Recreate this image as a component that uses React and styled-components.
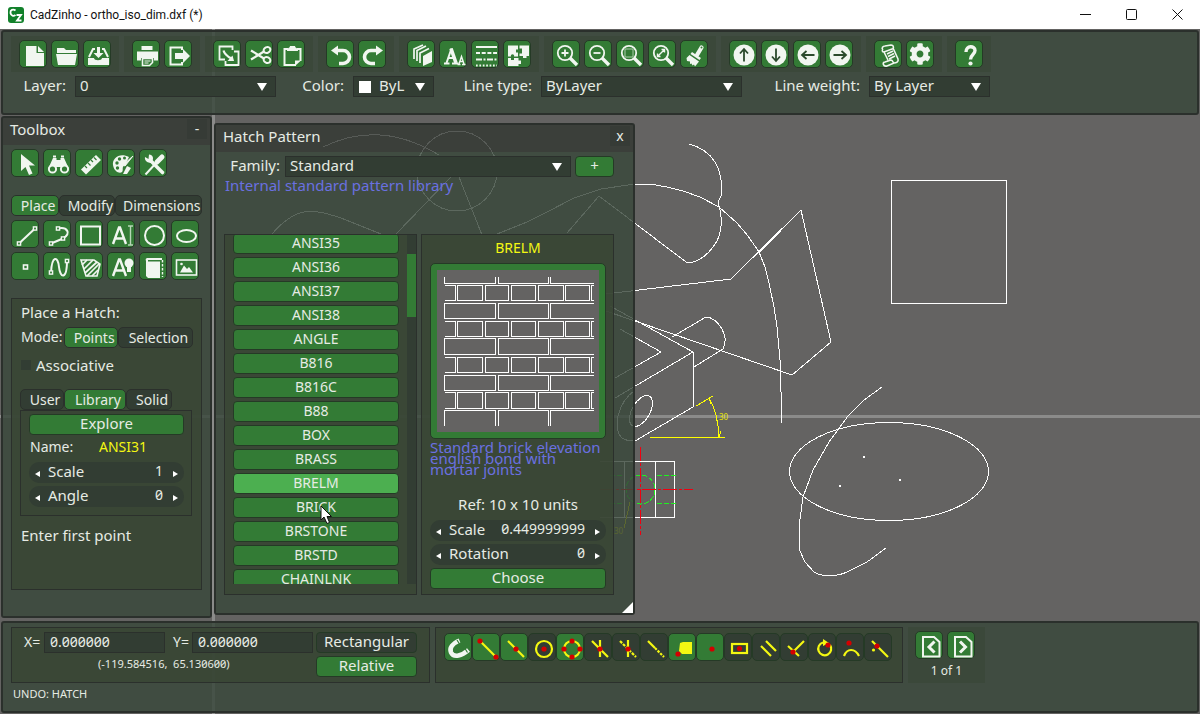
import React from "react";
import styled, { createGlobalStyle, css } from "styled-components";
import { FaCog } from "react-icons/fa";

const C = {
  canvas: "#646362",
  panel: "rgba(56, 71, 58, 0.82)",
  head: "rgba(50, 55, 50, 0.82)",
  group: "rgba(57, 70, 53, 0.85)",
  edge: "#2b302c",
  field: "#323d33",
  green: "#337b35",
  active: "#4caf50",
  text: "#e6ebe4",
  blue: "#6a70e0",
  yellow: "#f4f812",
  red: "#d40000",
};

const Global = createGlobalStyle`
  *, *::before, *::after { box-sizing: border-box; }
  body { margin: 0; background: ${C.canvas}; }
  body, button, input, select {
    font-family: "Noto Sans", "Open Sans", sans-serif;
    font-size: 15px;
    line-height: 20px;
    color: ${C.text};
  }
  button, input, select { padding: 0; margin: 0; border: 0; outline: 0; }
`;

/* ---------- shell ---------- */

const Page = styled.div`
  display: flex;
  flex-direction: column;
  min-height: 100vh;
`;

const TitleBar = styled.header`
  display: flex;
  align-items: center;
  height: 29px;
  padding-left: 8px;
  background: #fff;
  color: #111;
  svg { display: block; }
`;

const AppTitle = styled.h1`
  flex: 1;
  margin: 0 0 0 6px;
  font-family: Roboto, "Open Sans", sans-serif;
  font-size: 12px;
  font-weight: 400;
  line-height: 20px;
`;

const WinButton = styled.button`
  display: grid;
  place-items: center;
  width: 46px;
  height: 28px;
  background: none;
`;

const Workspace = styled.main`
  position: relative;
  flex: 1;
  display: flex;
  flex-direction: column;
  padding: 1px 1px 0 1px;
  overflow: hidden;
`;

const Drawing = styled.svg`
  position: absolute;
  inset: 0;
  width: 100%;
  height: 100%;
  shape-rendering: crispEdges;
`;

const Panel = styled.section`
  position: relative;
  border: 2px solid ${C.edge};
  border-radius: 3px;
`;

const TopBar = styled(Panel)`
  height: 85px;
  padding: 4px 8px;
  background: ${C.panel};
`;

const Middle = styled.div`
  flex: 1;
  display: flex;
  align-items: flex-start;
  gap: 2px;
  padding-top: 1px;
`;

const PanelHead = styled.header`
  display: flex;
  justify-content: space-between;
  align-items: center;
  height: 27px;
  padding: 0 3px 5px 7px;
  background: ${C.head};
`;

const PanelTitle = styled.h2`
  margin: 0;
  font-size: 15px;
  font-weight: 400;
`;

const HeadButton = styled.button`
  width: 20px;
  height: 20px;
  background: rgba(50, 55, 50, 0.5);
  font-size: 14px;
`;

/* ---------- shared controls ---------- */

const ToolRow = styled.div`
  display: flex;
  gap: ${(p) => p.$gap || 0}px;
`;

const ToolGroup = styled.div`
  display: flex;
  gap: 4px;
  padding: 4px 8px;
  background: rgba(57, 70, 53, 0.6);
`;

const IconButton = styled.button`
  display: grid;
  place-items: center;
  flex: none;
  width: 28px;
  height: 28px;
  border: 1px solid #253a26;
  border-radius: 5px;
  background: ${(p) => (p.$off ? C.field : C.green)};
  svg { display: block; }
`;

const Group = styled.div`
  border: 1px solid ${C.edge};
  background: ${C.group};
`;

const Button = styled.button`
  display: block;
  flex: none;
  width: ${(p) => p.$w || "100%"};
  height: 21px;
  padding-bottom: 2px;
  line-height: 17px;
  border: 1px solid #253a26;
  border-radius: 4px;
  background: ${(p) => (p.$off ? C.field : p.$active ? C.active : C.green)};
  font-size: ${(p) => (p.$caps ? 14 : 15)}px;
`;

const Tabs = styled.div`
  display: flex;
`;

const Tab = styled.button`
  height: 21px;
  width: ${(p) => p.$w}px;
  padding-left: 6px;
  line-height: 19px;
  border: 1px solid ${C.edge};
  border-radius: 5px;
  background: ${(p) => (p.$on ? C.green : C.field)};
  font-size: 14px;
  white-space: nowrap;
`;

const Combo = styled.div`
  display: flex;
  align-items: center;
  flex: ${(p) => (p.$w ? "none" : "1")};
  width: ${(p) => (p.$w ? `${p.$w}px` : "auto")};
  height: 21px;
  padding: 0 8px 0 4px;
  border: 1px solid ${C.edge};
  background: ${C.field};
  select {
    appearance: none;
    flex: 1;
    min-width: 0;
    height: 20px;
    margin-bottom: 3px;
    background: transparent;
  }
`;

const Swatch = styled.span`
  width: 12px;
  height: 12px;
  margin: 0 8px 0 1px;
  background: #fff;
`;

const FieldLabel = styled.label`
  flex: none;
  width: ${(p) => p.$w}px;
  padding: 0 ${(p) => p.$pad || 9}px 3px 0;
  text-align: right;
  white-space: nowrap;
`;

const FieldRow = styled.div`
  display: flex;
  align-items: center;
  margin-top: 3px;
`;

const Pill = styled.div`
  display: flex;
  align-items: center;
  height: 21px;
  padding: 0 5px 0 6px;
  border-radius: 10px;
  background: ${C.field};
  label { padding: 0 0 4px 7px; }
  input {
    flex: 1;
    min-width: 0;
    height: 20px;
    margin-right: 10px;
    padding-bottom: 3px;
    background: transparent;
    text-align: right;
    font-size: 14px;
    font-variant-numeric: slashed-zero;
  }
`;

const Step = styled.button`
  width: 6px;
  height: 20px;
  background: none;
  svg { display: block; margin-top: 2px; }
`;

const Arrow = () => (
  <svg width="10" height="8" viewBox="0 0 10 8" aria-hidden="true">
    <path d="M0 0h10L5 8z" fill="#fff" />
  </svg>
);

function Select({ id, value, w, swatch }) {
  return (
    <Combo $w={w}>
      {swatch && <Swatch />}
      <select id={id} defaultValue={value}>
        <option>{value}</option>
      </select>
      <Arrow />
    </Combo>
  );
}

function Property({ id, label, value }) {
  return (
    <Pill>
      <Step aria-label={`Decrease ${label}`}>
        <svg width="5" height="6" viewBox="0 0 5 6"><path d="M5 0v6L0 3z" fill="#fff" /></svg>
      </Step>
      <label htmlFor={id}>{label}</label>
      <input id={id} defaultValue={value} />
      <Step aria-label={`Increase ${label}`}>
        <svg width="5" height="6" viewBox="0 0 5 6"><path d="M0 0v6l5-3z" fill="#fff" /></svg>
      </Step>
    </Pill>
  );
}

/* ---------- icons, on a 28 unit grid ---------- */

const W = "#f1f6f0";
const G = C.green;
const line = { fill: "none", stroke: W, strokeWidth: 2 };
const thin = { fill: "none", stroke: W, strokeWidth: 1.4 };
const node = (x, y) => <rect x={x - 1.6} y={y - 1.6} width="3.2" height="3.2" fill={G} stroke={W} strokeWidth="1.4" />;
const lens = (
  <>
    <circle cx="12" cy="12" r="7.2" {...line} strokeWidth="1.8" />
    <path d="M17 17l7 7" {...line} strokeWidth="3.4" />
  </>
);
const disc = (angle) => (
  <g transform={`rotate(${angle} 14 14)`}>
    <circle cx="14" cy="14" r="10.5" fill={W} />
    <path d="M14 20.500V9M10 12.500l4-4.500 4 4.500" fill="none" stroke="#2b4a2c" strokeWidth="1.8" />
  </g>
);

const icons = {
  new: <><path d="M6 5h10.500v7H24v13H6z" fill={W} /><path d="M18 5l6 6h-6z" fill={W} /></>,
  open: <><path d="M5 7h7l2 2h10v3H5z" fill={W} /><path d="M4 13h21l-2 11H6z" fill={W} /></>,
  save: <><path d="M4 17h6c0 3 8 3 8 0h7v7H4z" fill={W} /><path d="M5 16L9 8h2M24 16l-4-8h-2" {...line} /><path d="M13 6h3v6h3.500l-5 5-5-5H13z" fill={W} /></>,
  print: <><path d="M8.500 5h11v4h-11z" fill={W} /><path d="M4 10.500h21v9h-4V17H8v2.500H4z" fill={W} /><path d="M9.500 17.500h10v4l-3 3h-7z" {...line} strokeWidth="1.600" /><path d="M11.500 20h6M11.500 22h4" {...thin} strokeWidth="1" /></>,
  exit: <><path d="M17 9V6.500H5.500v17H17V21" {...line} /><path d="M10 12h8V8l7 7-7 7v-4h-8z" fill={W} /></>,
  copy: <><path d="M11 18.500H5.500v-13h13V9" {...line} strokeWidth="1.800" /><path d="M11.500 20v4h13V10.500H20" {...line} strokeWidth="1.800" /><path d="M9.500 9.500c1 4 4 6 8 8" {...line} strokeWidth="2.200" /><path d="M20 20h-6.500l5-5.500z" fill={W} /></>,
  cut: <><path d="M5 9.500l13 8M5 18.500l13-8" {...line} strokeWidth="2.200" /><ellipse cx="21" cy="9" rx="3.500" ry="2.800" {...line} transform="rotate(-25 21 9)" /><ellipse cx="21" cy="19" rx="3.500" ry="2.800" {...line} transform="rotate(25 21 19)" /></>,
  paste: <><path d="M10 8H6.500v16H18M19 8h3.500v12" {...line} /><path d="M9 10c0-4 2.500-2 3-5h5c.5 3 3 1 3 5z" fill={W} /><path d="M17 25v-5.500h6z" fill={W} /></>,
  undo: <><path d="M9 9.500h7a6.500 6.500 0 010 13h-4" {...line} strokeWidth="3.600" /><path d="M4 9.500l7-5v10z" fill={W} /></>,
  redo: <><path d="M19 9.500h-7a6.500 6.500 0 000 13h4" {...line} strokeWidth="3.600" /><path d="M24 9.500l-7-5v10z" fill={W} /></>,
  layers: <><path d="M15 15l9-5v11l-9 4z" fill={W} /><path d="M12 22V12l9-4.500M9 20V9.500L18 5M6 18V8l9-4" {...line} strokeWidth="1.700" /></>,
  fonts: <><path d="M4 22.500h5.500M12 22.500h6.500" {...line} /><path d="M6.500 22L11.500 7.500" {...line} strokeWidth="2" /><path d="M11 7.500L16 22" {...line} strokeWidth="3.600" /><path d="M8.500 17h6" {...line} /><path d="M17.500 23.500h3M22 23.500h3.500M19 23l2.500-7.500 2.500 7.500M20 20.500h3.500" {...thin} /></>,
  ltype: <g {...line}><path d="M4 6h21" /><path d="M4 12h21" strokeDasharray="4 1.700" /><path d="M4 18.500h21" strokeDasharray="6 1.500 2 1.500" /><path d="M4 24.500h21" strokeDasharray="1.700 1.700" /></g>,
  block: <><path d="M4 4.500h10v4h-2v3h2v4H4z" fill={W} /><path d="M15.500 4.500H25V15h-2.500v2H19v-2h-3.500v-2.500h2.500v-5h-2.500z" fill={W} /><path d="M4 17h3v2h3v-2h4.500v2.500H17V23h-2.500v2H4z" fill={W} /><circle cx="8.500" cy="15" r="1.700" fill={G} /></>,
  zoomIn: <>{lens}<path d="M8.500 12h7M12 8.500v7" {...line} strokeWidth="1.800" /></>,
  zoomOut: <>{lens}<path d="M8.500 12h7" {...line} strokeWidth="1.800" /></>,
  zoomWin: <>{lens}<rect x="8" y="8" width="8" height="8" fill="none" stroke="#a9cda9" /></>,
  zoomAll: <>{lens}<path d="M9 15l6-6M12.500 8.500h3v3M8.500 12.500v3h3" {...thin} /></>,
  brush: <><path d="M20.500 6.500L16 14" {...line} strokeWidth="4.200" strokeLinecap="round" /><path d="M11 11l9 6-1.500 2-9-6z" fill={W} /><path d="M8.500 14l9.500 6.500-4 5-1-2-1.500 1-1-2-1.500.5v-2.500L6 20l-.5-3z" fill={W} /><circle cx="20.500" cy="6.500" r="1" fill={G} /></>,
  up: disc(0), down: disc(180), left: disc(-90), right: disc(90),
  script: <g {...line} strokeWidth="1.600"><path d="M8 9c-2-2 0-4 2-4l6-1c3 0 3 4 1 4l-8 3c-2 0-2-2-1-2M9 11l4 8M18 7l5 11c1 3-2 4-4 4l-7 3c-4 1-5-4-2-4l3-1M12 13l6-3M13 15.500l6-3M14 18l6-3M19 22c-2-1-1-3-3-3l-6 2" /></g>,
  help: <><path d="M10 11c0-7 9-6.500 9-1.500 0 4-4.500 4-4.500 9" {...line} strokeWidth="3.400" /><circle cx="14.500" cy="22.500" r="2.100" fill={W} /></>,
  pointer: <path d="M9 4v17l4.500-4 3.500 8 3.500-1.500-3.500-8h6z" fill={W} />,
  find: <><path d="M4 19L9 8h3.500v2h4V8H20l5 11-5-3-3 1h-5l-3-1z" fill={W} /><path d="M9 6.500h3M17 6.500h3" {...line} /><circle cx="8.500" cy="19" r="3.600" fill={G} stroke={W} strokeWidth="2" /><circle cx="20.500" cy="19" r="3.600" fill={G} stroke={W} strokeWidth="2" /></>,
  ruler: <><path d="M5 19.500L20 5l5 5-15 14.500z" fill={W} /><path d="M9 16l2 2M12 13l2.500 2.500M15 10l2 2M18 7.500l2.500 2.500" stroke={G} strokeWidth="1.200" /></>,
  palette: <><path d="M21 7C12 2 4 8 5 15s7 9 9 7-1-5 3-7z" fill={W} /><g fill={G}><circle cx="9" cy="13" r="1.700" /><circle cx="11.500" cy="9" r="1.700" /><circle cx="16.500" cy="8" r="1.500" /><circle cx="9.500" cy="18" r="1.700" /></g><path d="M25 6l-8 10-2-1z" fill={W} stroke={W} /><path d="M19 16l4 2-4 6-4 0z" fill={W} /></>,
  tools: <><path d="M5.500 24.500L17 12" {...line} strokeWidth="2" /><path d="M17 12l5-5" {...line} strokeWidth="5" strokeLinecap="round" /><path d="M11 11l11.500 11.500" {...line} strokeWidth="3.600" strokeLinecap="round" /><path d="M5 7l3.500 2 .5-4.500c4 0 5 4 3 7s-8 0-7-4.500z" fill={W} /></>,
  line: <><path d="M7 22.500L23 7.500" {...line} />{node(7, 22.500)}{node(23, 7.500)}</>,
  poly: <><path d="M7 22.500l12-5c9-5 4-12-5-10" {...line} />{node(7, 22.500)}{node(19, 17.500)}{node(14, 7.500)}</>,
  rect: <rect x="5" y="5.500" width="19" height="18" {...line} />,
  text: <><path d="M5 23L11 6.500h1L18 23M7.500 17.500h8" {...line} strokeWidth="2.400" /><path d="M20 5h5M22.500 5v19M20 24h5" fill="none" stroke="#b7d6b7" strokeWidth="1.400" /></>,
  circle: <circle cx="14.500" cy="14.500" r="9.500" {...line} />,
  ellipse: <ellipse cx="14.500" cy="15" rx="9.500" ry="6" {...line} />,
  point: <rect x="11.500" y="12" width="4" height="4" {...thin} strokeWidth="1.600" />,
  spline: <><path d="M7 19.500C8 2 14 3 15 14s8 14 8-7" {...line} />{node(7, 19.500)}{node(23, 8)}</>,
  hatch: <><path d="M5 7h13l6 4-3 12H10z" {...line} strokeWidth="1.600" /><path d="M6 12l5-5M8 16l9-9M9 20l12-11M11 23l12-12M16 23l6-6" {...line} strokeWidth="1.700" /></>,
  note: <><path d="M5 23L11 6.500h1L18 23M7.500 17.500h8" {...line} strokeWidth="2.400" /><circle cx="21" cy="10" r="4.500" fill={W} /><path d="M19 13h4v6h-4z" fill={W} /></>,
  book: <><path d="M6 8c-1-3 1-3 2-3h14v2H8v1.500h12V25H8l-2-2z" fill={W} /><path d="M22.500 7v17" {...thin} strokeDasharray="2.500 1.500" /></>,
  image: <><rect x="4.500" y="7" width="20" height="15" {...line} strokeWidth="1.600" /><path d="M8 19.500l4-7 3 3.500 2-2 4 5.500z" fill={W} /><circle cx="9.500" cy="11" r="1.300" fill={W} /></>,
  prev: <><path d="M7 5h11l5.500 5v14.500H7z" {...line} /><path d="M18.500 9.500L13 15l5.500 5.500" {...line} strokeWidth="3" /></>,
  next: <><path d="M7 5h11l5.500 5v14.500H7z" {...line} /><path d="M12 9.500l5.500 5.500-5.500 5.500" {...line} strokeWidth="3" /></>,
};

const yl = { fill: "none", stroke: C.yellow, strokeWidth: 2.2 };
const dot = (x, y) => <circle cx={x} cy={y} r="2.600" fill={C.red} />;
const snaps = [
  ["Snap", true, <><path d="M14.500 6.500c-7 3-10.500 7.500-8.500 12 3 6 11 3 17.500-2.500" fill="none" stroke={W} strokeWidth="4.500" /><path d="M12 6l2.500 4M20 14.500l2.500 4" stroke={G} strokeWidth="1.200" /></>],
  ["End point", true, <><path d="M7 7l16 16" {...yl} />{dot(7, 7)}{dot(23, 23)}</>],
  ["Middle", true, <><path d="M7 7l16 16" {...yl} />{dot(15, 15)}</>],
  ["Center", false, <><circle cx="15" cy="15" r="8" {...yl} />{dot(15, 15)}</>],
  ["Quadrant", true, <><circle cx="15" cy="15" r="8" {...yl} />{dot(15, 7)}{dot(15, 23)}{dot(7, 15)}{dot(23, 15)}</>],
  ["Intersection", false, <><path d="M7 7l16 16M15 6v17" {...yl} />{dot(15, 15)}</>],
  ["Apparent intersection", false, <><path d="M7 7l16 16" {...yl} strokeDasharray="3 1.200" /><path d="M15 6v17" {...yl} />{dot(15, 15)}</>],
  ["Extension", false, <><path d="M7 7l7 7" {...yl} /><path d="M14 14l9 9" {...yl} strokeDasharray="2.500 1.200" /></>],
  ["Insertion", true, <><path d="M11 9l3-1h9v12H13l-3-3z" fill={C.yellow} />{dot(9, 20)}</>],
  ["Node", true, dot(15, 15)],
  ["Bounding", false, <><rect x="7" y="10" width="15" height="9" {...yl} />{dot(14.500, 14.500)}</>],
  ["Parallel", false, <><path d="M8 12l10 10M13 7l10 10" {...yl} /></>],
  ["Perpendicular", false, <><path d="M23 7L12 18M7 12l11 10" {...yl} />{dot(12, 18)}</>],
  ["Tangent", false, <><path d="M21 11a6.500 6.500 0 11-7-2.500" {...yl} /><path d="M14 5l6 4-6 3z" fill={C.yellow} />{dot(19, 11)}</>],
  ["Nearest arc", false, <><path d="M7 22c3-8 11-8 15 0" {...yl} />{dot(12, 9)}</>],
  ["Nearest", false, <><path d="M7 7l16 16" {...yl} />{dot(12, 12)}<circle cx="8.500" cy="16" r="1.600" fill={C.yellow} /></>],
];

const Glyph = ({ children }) => (
  <svg width="28" height="28" viewBox="0 0 28 28" aria-hidden="true">{children}</svg>
);

function Tool({ name }) {
  return (
    <IconButton aria-label={name}>
      {name === "settings" ? <FaCog size={22} color={W} /> : <Glyph>{icons[name]}</Glyph>}
    </IconButton>
  );
}

/* ---------- drawing area ---------- */

function Canvas() {
  return (
    <Drawing aria-label="Drawing">
      <g transform="translate(0 -29)" fill="none" stroke="#fff" strokeWidth="1">
        <path d="M0 416.500H4000M213.500 0V4000" stroke="#8b8b8a" strokeWidth="3" />
        <path d="M689 144C712 150 724 168 721 196L718 202C724 222 722 236 713 247 706 257 696 262 690 263L686 262 599 196 567 233" />
        <path d="M497 234L527 222 547 212 574 198 601 189 635 184 650 184 667 187 683 191 700 197 719 207 737 223 748 236 759 252 765 267 769 283 774 307 777 327 780 360 782 423" />
        <path d="M480 303L614 293 731 279 801 210 831 342 792 375 635 321 600 309" />
        <path d="M759 252L780 231" strokeWidth="2" />
        <path d="M610 306L693 352V407L635 441M672 337L706 317C718 318 730 336 723 349L694 367M693 352L615 398M620 329L661 352 615 378" />
        <ellipse cx="641" cy="411" rx="17" ry="9" transform="rotate(-60 641 411)" />
        <path d="M635 390C616 404 613 430 622 438 626 441 631 441 635 441" />
        <rect x="891.500" y="180.500" width="115" height="123" />
        <ellipse cx="889" cy="471.500" rx="99.500" ry="49" />
        <path d="M882 387L864 400 848 416 829 442 813 470 803 497 799 527 800 551 805 562 814 572C822 577 836 577 847 572L867 562 886 548" />
        <circle cx="457" cy="171" r="40" />
        <path d="M323 147Q380 119 439 155M272 234C297 205 313 209 341 218L381 234M396 234L451 177M459 177L482 235" />
        <path d="M600 461.500H674.500V517.500H600M655.500 461V517M624.500 461V517" />
        <g fill="#fff" stroke="none">
          <rect x="863" y="456" width="2" height="2" />
          <rect x="899" y="479" width="2" height="2" />
          <rect x="839" y="485" width="2" height="2" />
        </g>
        <g stroke="#20f020" strokeDasharray="5 2">
          <path d="M657 475.500H676M657 503.500H676M610 475.500H624M610 503.500H624" />
          <circle cx="640.500" cy="489.500" r="14.500" />
        </g>
        <g stroke="#f00010" strokeDasharray="14 2 3 2">
          <path d="M640.500 447V535M600 489.500H693" />
        </g>
        <g stroke="#ffff00">
          <path d="M650 437.500H725M696 406L713 396M709 398Q718 413 719 437M709 398L711 404M719 437L721 431M624 528L630 502" />
        </g>
        <g fill="#e6e600" stroke="none" fontSize="8" fontFamily="Noto Sans, sans-serif">
          <text x="719" y="420">30</text>
          <text x="614" y="534">30</text>
        </g>
      </g>
    </Drawing>
  );
}

/* ---------- top bar ---------- */

const toolGroups = [
  ["new", "open", "save"],
  ["print", "exit"],
  ["copy", "cut", "paste"],
  ["undo", "redo"],
  ["layers", "fonts", "ltype", "block"],
  ["zoomIn", "zoomOut", "zoomWin", "zoomAll", "brush"],
  ["up", "down", "left", "right"],
  ["script", "settings"],
  ["help"],
];

function MainBar() {
  return (
    <TopBar>
      <ToolRow $gap={5}>
        {toolGroups.map((g) => (
          <ToolGroup key={g[0]}>{g.map((n) => <Tool key={n} name={n} />)}</ToolGroup>
        ))}
      </ToolRow>
      <FieldRow>
        <FieldLabel $w={64} htmlFor="layer">Layer:</FieldLabel>
        <Select id="layer" value="0" w={201} />
        <FieldLabel $w={77} htmlFor="color">Color:</FieldLabel>
        <Select id="color" value="ByL" w={81} swatch />
        <FieldLabel $w={107} htmlFor="ltype">Line type:</FieldLabel>
        <Select id="ltype" value="ByLayer" w={201} />
        <FieldLabel $w={127} htmlFor="lweight">Line weight:</FieldLabel>
        <Select id="lweight" value="By Layer" w={121} />
      </FieldRow>
    </TopBar>
  );
}

/* ---------- toolbox ---------- */

const ToolboxPanel = styled(Panel)`
  flex: none;
  width: 211px;
`;

const ToolboxBody = styled.div`
  display: flex;
  flex-direction: column;
  padding: 4px 8px 26px;
  background: ${C.panel};
`;

const ToolGrid = styled.div`
  display: grid;
  grid-template-columns: repeat(6, 28px);
  gap: 4px;
  margin-top: 4px;
`;

const TabStrip = styled(Tabs)`
  margin-top: 18px;
`;

const HatchForm = styled(Group)`
  min-height: 292px;
  margin-top: 18px;
  padding: 3px 8px;
`;

const Line = styled.p`
  margin: 0;
  padding-left: 1px;
`;

const ModeRow = styled.div`
  display: flex;
  margin: 5px 0 7px 1px;
  > span { width: 44px; font-size: 14px; }
`;

const Check = styled.label`
  display: flex;
  align-items: center;
  gap: 5px;
  margin-bottom: 14px;
  padding-left: 1px;
  input {
    appearance: none;
    width: 10px;
    height: 10px;
    background: ${C.field};
  }
`;

const LibraryBox = styled(Group)`
  display: flex;
  flex-direction: column;
  gap: 3px;
  width: 172px;
  padding: 3px 7px 8px 8px;
`;

const NameRow = styled.div`
  display: flex;
  height: 21px;
  line-height: 17px;
  padding-left: 1px;
  font-size: 14px;
  span { width: 69px; }
  output { color: ${C.yellow}; }
`;

const Prompt = styled(Line)`
  margin-top: 9px;
`;

function Toolbox() {
  return (
    <ToolboxPanel>
      <PanelHead>
        <PanelTitle>Toolbox</PanelTitle>
        <HeadButton aria-label="Minimize">-</HeadButton>
      </PanelHead>
      <ToolboxBody>
        <ToolRow $gap={4}>
          {["pointer", "find", "ruler", "palette", "tools"].map((n) => <Tool key={n} name={n} />)}
        </ToolRow>
        <TabStrip>
          <Tab $on $w={49}>Place</Tab>
          <Tab $w={57}>Modify</Tab>
          <Tab $w={88}>Dimensions</Tab>
        </TabStrip>
        <ToolGrid>
          {["line", "poly", "rect", "text", "circle", "ellipse", "point", "spline", "hatch", "note", "book", "image"].map((n) => (
            <Tool key={n} name={n} />
          ))}
        </ToolGrid>
        <HatchForm>
          <Line>Place a Hatch:</Line>
          <ModeRow>
            <span>Mode:</span>
            <Tab $on $w={54}>Points</Tab>
            <Tab $w={76}>Selection</Tab>
          </ModeRow>
          <Check><input type="checkbox" />Associative</Check>
          <Tabs>
            <Tab $w={44}>User</Tab>
            <Tab $on $w={62}>Library</Tab>
            <Tab $w={46}>Solid</Tab>
          </Tabs>
          <LibraryBox>
            <Button>Explore</Button>
            <NameRow><span>Name:</span><output>ANSI31</output></NameRow>
            <Property id="hatch-scale" label="Scale" value="1" />
            <Property id="hatch-angle" label="Angle" value="0" />
          </LibraryBox>
          <Prompt>Enter first point</Prompt>
        </HatchForm>
      </ToolboxBody>
    </ToolboxPanel>
  );
}

/* ---------- hatch pattern window ---------- */

const HatchPanel = styled(Panel)`
  flex: none;
  width: 421px;
  margin-top: 7px;
`;

const HatchBody = styled.div`
  padding: 4px 19px 18px 8px;
  background: ${C.panel};
`;

const FamilyRow = styled.div`
  display: flex;
  align-items: center;
  height: 21px;
  gap: 4px;
`;

const Hint = styled.p`
  height: 57px;
  margin: 0;
  padding-left: 1px;
  line-height: 16px;
  color: ${C.blue};
`;

const Columns = styled.div`
  display: grid;
  grid-template-columns: repeat(2, minmax(0, 1fr));
  gap: 4px;
  height: 361px;
`;

const ListBox = styled(Group)`
  display: flex;
  justify-content: space-between;
  min-height: 0;
  padding: 0 0 10px 8px;
`;

const ListView = styled.div`
  width: 166px;
  overflow: hidden;
`;

const List = styled.div`
  display: flex;
  flex-direction: column;
  gap: 3px;
  margin-top: -2px;
`;

const Scrollbar = styled.div`
  width: 9px;
  padding-top: 19px;
  background: ${C.field};
  &::before {
    content: "";
    display: block;
    height: 63px;
    background: ${C.green};
  }
`;

const Detail = styled(Group)`
  display: flex;
  flex-direction: column;
  gap: 3px;
  padding: 3px 7px 5px 8px;
`;

const PatternName = styled.h3`
  margin: 0 0 2px;
  font-size: 14px;
  font-weight: 400;
  color: ${C.yellow};
  text-align: center;
`;

const Preview = styled.div`
  padding: 6px;
  border: 1px solid #253a26;
  border-radius: 5px;
  background: ${C.green};
  svg { display: block; width: 100%; background: ${C.canvas}; shape-rendering: crispEdges; }
`;

const Description = styled.p`
  flex: 1;
  margin: 0;
  line-height: 11px;
  color: ${C.blue};
`;

const RefUnits = styled.p`
  margin: 0 0 3px;
  text-align: center;
`;

const Grip = styled.svg`
  position: absolute;
  right: 0;
  bottom: 0;
`;

const Pointer = styled.svg`
  position: absolute;
  left: 104px;
  top: 380px;
`;

const patterns = ["ANSI35", "ANSI36", "ANSI37", "ANSI38", "ANGLE", "B816", "B816C", "B88", "BOX", "BRASS", "BRELM", "BRICK", "BRSTONE", "BRSTD", "CHAINLNK"];

const courses = [[15, 30], [51, 66], [86, 101], [121, 137]];
const stretchers = [[33, 48], [68, 83], [104, 119]];
const headers = [[20, 45], [48, 71], [74, 97], [100, 125], [127, 151]];

function Bricks() {
  let d = "M7 6V13H58V6M61 6V13H110V6M112 6V13H156";
  courses.forEach(([a, b]) => {
    d += `M7 ${a}H18V${b}H7M156 ${a}H153V${b}H156`;
    headers.forEach(([l, r]) => { d += `M${l} ${a}H${r}V${b}H${l}z`; });
  });
  stretchers.forEach(([a, b]) => {
    d += `M7 ${a}H58V${b}H7zM61 ${a}H110V${b}H61zM156 ${a}H112V${b}H156`;
  });
  d += "M7 155V139H58V155M61 155V139H110V155M112 155V139H156";
  return (
    <svg viewBox="0 0 161 161" aria-label="Pattern preview">
      <path d={d} transform="translate(0.500 0.500)" fill="none" stroke="#fff" />
    </svg>
  );
}

function HatchWindow() {
  return (
    <HatchPanel>
      <PanelHead>
        <PanelTitle>Hatch Pattern</PanelTitle>
        <HeadButton aria-label="Close">x</HeadButton>
      </PanelHead>
      <HatchBody>
        <FamilyRow>
          <FieldLabel $w={57} $pad={1} htmlFor="family">Family:</FieldLabel>
          <Select id="family" value="Standard" />
          <Button $w="39px">+</Button>
        </FamilyRow>
        <Hint>Internal standard pattern library</Hint>
        <Columns>
          <ListBox>
            <ListView>
              <List>
                {patterns.map((p) => <Button key={p} $caps $active={p === "BRELM"}>{p}</Button>)}
              </List>
            </ListView>
            <Scrollbar />
          </ListBox>
          <Detail>
            <PatternName>BRELM</PatternName>
            <Preview><Bricks /></Preview>
            <Description>Standard brick elevation english bond with mortar joints</Description>
            <RefUnits>Ref: 10 x 10 units</RefUnits>
            <Property id="pat-scale" label="Scale" value="0.449999999" />
            <Property id="pat-rotation" label="Rotation" value="0" />
            <Button>Choose</Button>
          </Detail>
        </Columns>
      </HatchBody>
      <Grip width="11" height="11" viewBox="0 0 11 11"><path d="M11 0v11H0z" fill="#fff" /></Grip>
      <Pointer width="13" height="20" viewBox="0 0 13 20">
        <path d="M1 1v14l3-3 3 6.500 2.500-1L7 11.500h4.500z" fill="#fff" stroke="#111" />
      </Pointer>
    </HatchPanel>
  );
}

/* ---------- status bar ---------- */

const StatusPanel = styled(Panel)`
  height: 92px;
  margin-bottom: 1px;
  padding: 4px 8px;
  background: ${C.panel};
`;

const StatusGroups = styled.div`
  display: flex;
  gap: 5px;
  height: 56px;
`;

const Coords = styled(Group)`
  display: grid;
  grid-template-columns: 293px 101px;
  grid-template-rows: 21px 21px;
  row-gap: 3px;
  column-gap: 2px;
  width: 419px;
  padding: 4px 0 4px 9px;
`;

const XY = styled.div`
  display: flex;
  align-items: center;
  label { width: 23px; padding: 0 0 2px 3px; font-size: 14px; }
  label + input + label { width: 27px; padding-left: 8px; }
  input {
    width: 121px;
    height: 21px;
    padding: 0 0 2px 5px;
    border: 1px solid ${C.edge};
    background: ${C.field};
    font-size: 14px;
    font-variant-numeric: slashed-zero;
  }
`;

const Small = styled.p`
  margin: 0;
  font-size: 11px;
  line-height: 16px;
  ${(p) => p.$center && css`padding-top: 4px; text-align: center; font-size: 12px;`}
  ${(p) => p.$coords && css`padding-left: 77px; white-space: pre; font-variant-numeric: slashed-zero;`}
`;

const Snaps = styled(Group)`
  display: flex;
  width: 468px;
  padding: 5px 8px;
`;

const Pager = styled.div`
  width: 77px;
  padding: 4px 7px;
  background: rgba(57, 70, 53, 0.6);
`;

const Message = styled(Small)`
  padding: 3px 2px;
`;

function StatusBar() {
  return (
    <StatusPanel>
      <StatusGroups>
        <Coords>
          <XY>
            <label htmlFor="x">X=</label><input id="x" defaultValue="0.000000" />
            <label htmlFor="y">Y=</label><input id="y" defaultValue="0.000000" />
          </XY>
          <Button $off>Rectangular</Button>
          <Small $coords>{"(-119.584516,  65.130600)"}</Small>
          <Button>Relative</Button>
        </Coords>
        <Snaps>
          {snaps.map(([name, on, art]) => (
            <IconButton key={name} aria-label={name} $off={!on}><Glyph>{art}</Glyph></IconButton>
          ))}
        </Snaps>
        <Pager>
          <ToolRow $gap={4}><Tool name="prev" /><Tool name="next" /></ToolRow>
          <Small $center>1 of 1</Small>
        </Pager>
      </StatusGroups>
      <Message>UNDO: HATCH</Message>
    </StatusPanel>
  );
}

export default function App() {
  return (
    <Page>
      <Global />
      <TitleBar>
        <svg width="16" height="16" viewBox="0 0 16 16" aria-hidden="true">
          <rect width="16" height="16" rx="3" fill="#12812b" />
          <path d="M7.500 3.500C5 1.500 2 3 2.500 6s3 3.500 5 2" fill="none" stroke="#fff" strokeWidth="1.800" />
          <path d="M8.500 8H13l-4 5.500h4.500" fill="none" stroke="#fff" strokeWidth="1.800" />
        </svg>
        <AppTitle>CadZinho - ortho_iso_dim.dxf (*)</AppTitle>
        <WinButton aria-label="Minimize"><svg width="11" height="11"><path d="M0 5.500h11" stroke="#111" /></svg></WinButton>
        <WinButton aria-label="Maximize"><svg width="11" height="11"><rect x=".5" y=".5" width="10" height="10" rx="1" fill="none" stroke="#111" /></svg></WinButton>
        <WinButton aria-label="Close"><svg width="11" height="11"><path d="M.5.5l10 10M10.500.5l-10 10" stroke="#111" /></svg></WinButton>
      </TitleBar>
      <Workspace>
        <Canvas />
        <MainBar />
        <Middle>
          <Toolbox />
          <HatchWindow />
        </Middle>
        <StatusBar />
      </Workspace>
    </Page>
  );
}
